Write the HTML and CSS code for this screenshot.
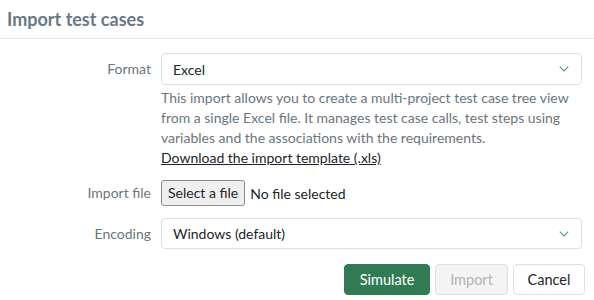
FILE: index.html
```html
<!DOCTYPE html>
<html lang="en">
<head>
<meta charset="utf-8">
<title>Import test cases</title>
<link rel="stylesheet" href="styles.css">
</head>
<body>
<div class="dialog">
  <header class="dialog-header">
    <h1 class="dialog-title">Import test cases</h1>
  </header>
  <form class="form">
    <label class="form-label label-select">Format</label>
    <div class="form-control">
      <div class="select">
        <span class="select-value">Excel</span>
        <svg class="chevron" width="10" height="6" viewBox="0 0 10 6"><path d="M0.8 0.6 L5 4.9 L9.2 0.6" fill="none" stroke="#4e9a6d" stroke-width="1.1"/></svg>
      </div>
      <p class="help">This import allows you to create a multi-project test case tree view from a single Excel file. It manages test case calls, test steps using variables and the associations with the requirements.</p>
      <a class="help-link" href="#">Download the import template (.xls)</a>
    </div>

    <label class="form-label label-file">Import file</label>
    <div class="form-control file-row">
      <span class="file-button">Select a file</span>
      <span class="file-name">No file selected</span>
    </div>

    <label class="form-label label-select">Encoding</label>
    <div class="form-control">
      <div class="select select-encoding">
        <span class="select-value">Windows (default)</span>
        <svg class="chevron" width="10" height="6" viewBox="0 0 10 6"><path d="M0.8 0.6 L5 4.9 L9.2 0.6" fill="none" stroke="#4e9a6d" stroke-width="1.1"/></svg>
      </div>
    </div>
  </form>
  <div class="actions">
    <button class="btn btn-primary" type="button">Simulate</button>
    <button class="btn btn-disabled" type="button" disabled>Import</button>
    <button class="btn btn-default" type="button">Cancel</button>
  </div>
</div>
</body>
</html>
```
FILE: styles.css
```css
* { box-sizing: border-box; }
html, body { margin: 0; padding: 0; background: #ffffff; }
body {
  font-family: Lato, "Open Sans", Arial, sans-serif;
  font-size: 14px;
  color: #212529;
  width: 594px;
  height: 300px;
  overflow: hidden;
}
.dialog-header {
  height: 39px;
  border-bottom: 1px solid #e9ecef;
  padding: 0 7px;
}
.dialog-title {
  margin: 0;
  padding-top: 8px;
  font-size: 18px;
  line-height: 22px;
  font-weight: 700;
  color: #6b7884;
}
.form {
  display: grid;
  grid-template-columns: 151px 421px;
  column-gap: 10px;
  row-gap: 12px;
  margin-top: 14px;
}
.form-label {
  text-align: right;
  color: #6c757d;
  line-height: 20px;
}
.label-select { padding-top: 6px; }
.label-file { padding-top: 3px; }
.select {
  height: 32px;
  border: 1px solid #dcdfe3;
  border-radius: 4px;
  display: flex;
  align-items: center;
  justify-content: space-between;
  padding: 0 12px 0 11px;
}
.select-encoding { height: 31px; }
.select-value { color: #212529; }
.help {
  margin: 3px 0 0;
  line-height: 20px;
  color: #6c757d;
}
.help-link {
  display: block;
  line-height: 20px;
  color: #212529;
  text-decoration: underline;
}
.file-row {
  display: flex;
  align-items: center;
  gap: 5px;
}
.file-button {
  height: 26px;
  line-height: 24px;
  padding: 0 6px;
  background: #efefef;
  border: 1px solid #8a8a8a;
  border-radius: 3px;
  color: #212529;
}
.file-name { color: #212529; }
.actions {
  display: flex;
  justify-content: flex-end;
  gap: 5px;
  padding-right: 9px;
  margin-top: 15px;
}
.btn {
  font-family: inherit;
  font-size: 14.5px;
  height: 31px;
  padding: 0 12px;
  border-radius: 4px;
  border: 1px solid #dcdfe3;
  background: #ffffff;
  color: #212529;
}
.btn-primary {
  background: #317b52;
  border-color: #317b52;
  color: #ffffff;
  width: 86px;
}
.btn-disabled {
  background: #f4f4f4;
  border-color: #dedede;
  color: #b3b3b3;
  width: 73px;
}
.btn-default { width: 72px; }
```
